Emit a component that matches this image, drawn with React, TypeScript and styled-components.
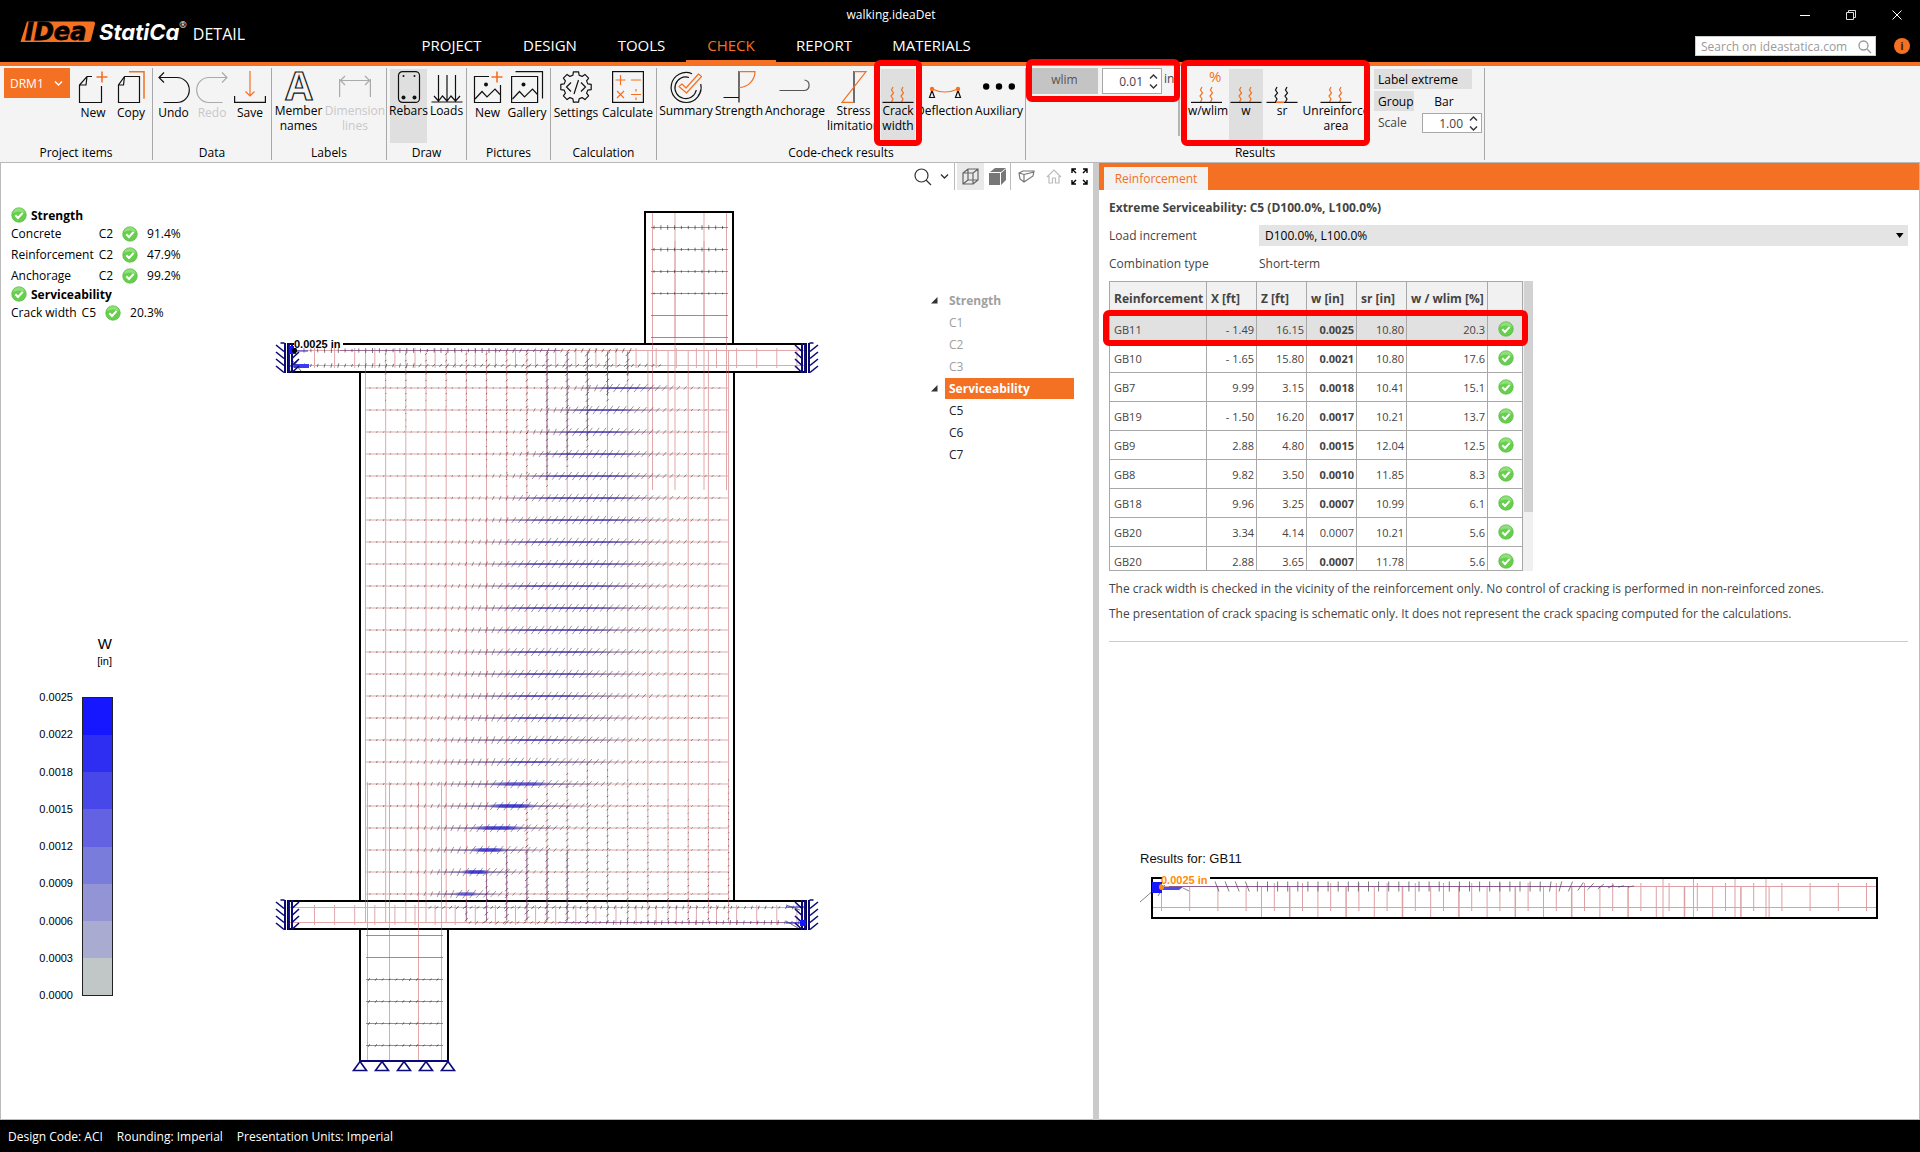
import React from 'react';
import styled, { createGlobalStyle, css } from 'styled-components';

const orange = '#f47023';
const uiFont = '"Open Sans", "Noto Sans", sans-serif';
const viewFont = '"Liberation Sans", Arial, sans-serif';

const GlobalStyle = createGlobalStyle`
  *, *::before, *::after { box-sizing: border-box; }
  body { margin: 0; background: #fff; font-family: ${uiFont}; font-size: 12px; line-height: 15px; color: #000; }
  button, input, select { font: inherit; color: inherit; border: 0; padding: 0; margin: 0; background: none; border-radius: 0; }
  svg { display: block; overflow: visible; }
`;

const Page = styled.div`
  height: 100vh;
  display: flex;
  flex-direction: column;
  overflow: hidden;
`;

/* ---------- header ---------- */

const Header = styled.header`
  display: flex;
  flex: none;
  background: #000;
  color: #fff;
  border-bottom: 4px solid ${orange};
`;
const Brand = styled.div`
  width: 400px;
  padding: 1px 0 0 20px;
  display: flex;
  align-items: center;
`;
const StatiCa = styled.span`
  margin-left: 3px;
  font: italic 700 22px/24px Inter, sans-serif;
`;
const Reg = styled.sup`
  align-self: flex-start;
  margin-top: 19px;
  font-size: 9px;
  line-height: 10px;
`;
const Product = styled.span`
  margin: 5px 0 0 6px;
  font-size: 16px;
  line-height: 20px;
`;
const HeaderCenter = styled.div`
  flex: 1;
`;
const DocTitle = styled.div`
  height: 28px;
  padding-top: 1px;
  line-height: 28px;
  text-align: center;
`;
const Nav = styled.nav`
  display: flex;
`;
const NavTab = styled.button<{ $w: number; $active?: boolean }>`
  width: ${p => p.$w}px;
  height: 34px;
  font-size: 15px;
  color: ${p => (p.$active ? orange : '#fff')};
  ${p => p.$active && css`box-shadow: inset 0 -2px ${orange};`}
`;
const HeaderRight = styled.div`
  width: 538px;
`;
const WindowButtons = styled.div`
  display: flex;
  justify-content: flex-end;
`;
const WindowButton = styled.button`
  width: 46px;
  height: 30px;
  display: grid;
  place-items: center;
`;
const SearchRow = styled.div`
  height: 32px;
  display: flex;
  align-items: center;
  justify-content: flex-end;
  gap: 18px;
  padding-right: 10px;
`;
const SearchBox = styled.label`
  width: 181px;
  height: 20px;
  display: flex;
  align-items: center;
  padding: 0 4px 0 5px;
  background: #fff;
  border: 1px solid #ccc;
`;
const SearchInput = styled.input`
  flex: 1;
  min-width: 0;
  outline: 0;
  color: #333;
  &::placeholder { color: #999; opacity: 1; }
`;
const InfoButton = styled.button`
  width: 16px;
  height: 16px;
  border-radius: 50%;
  background: ${orange};
  color: #402010;
  font-size: 11px;
  font-weight: 700;
  line-height: 16px;
`;

/* ---------- ribbon ---------- */

const Ribbon = styled.div`
  flex: none;
  display: flex;
  height: 97px;
  padding: 2px 0;
  background: #f4f4f4;
  border-bottom: 1px solid #b8b8b8;
`;
const Group = styled.section<{ $w: number }>`
  width: ${p => p.$w}px;
  flex: none;
  display: flex;
  flex-direction: column;
  justify-content: space-between;
  border-right: 1px solid #a8a8a8;
`;
const Tools = styled.div<{ $pad?: number }>`
  display: flex;
  padding-left: ${p => p.$pad ?? 1}px;
`;
const GroupLabel = styled.div`
  text-align: center;
`;
const ProjectButton = styled.button`
  width: 66px;
  height: 30px;
  margin-right: 4px;
  padding: 0 7px 0 6px;
  display: flex;
  align-items: center;
  justify-content: space-between;
  background: ${orange};
  color: #fff;
`;
const ToolButton = styled.button<{ $w: number; $active?: boolean; $off?: boolean; $tall?: boolean }>`
  position: relative;
  flex: none;
  width: ${p => p.$w}px;
  height: ${p => (p.$tall ? 74 : 71)}px;
  margin-top: 1px;
  padding-top: 2px;
  display: flex;
  flex-direction: column;
  align-items: center;
  white-space: nowrap;
  background: ${p => (p.$active ? '#dfdfdf' : 'transparent')};
  color: ${p => (p.$off ? '#c8c8c8' : '#000')};
`;
const ToolText = styled.span<{ $low?: boolean }>`
  padding-top: ${p => (p.$low ? 2 : 0)}px;
  text-align: center;
`;
const Marker = styled.span<{ $box: string }>`
  position: absolute;
  inset: ${p => p.$box};
  z-index: 2;
  border: 6px solid #f00;
  border-radius: 6px;
  pointer-events: none;
`;
const LimitArea = styled.div`
  position: relative;
  flex: none;
  width: 154px;
  height: 68px;
  padding-left: 5px;
  display: flex;
  align-items: flex-start;
  border-right: 2px solid #b4b4b4;
  color: #444;
`;
const LimitButton = styled.button`
  width: 67px;
  height: 26px;
  margin-right: 4px;
  padding-bottom: 4px;
  background: #c4c4c4;
  color: #555;
`;
const Unit = styled.span`
  padding: 3px 0 0 2px;
`;
const ModeArea = styled.div`
  position: relative;
  display: flex;
  flex: none;
  width: 190px;
  padding-left: 7px;
`;
const Options = styled.div`
  display: grid;
  grid-template-columns: 40px 60px;
  grid-auto-rows: 20px;
  gap: 2px 8px;
  padding: 1px 0 0 4px;
`;
const OptionButton = styled.button<{ $active?: boolean; $wide?: boolean }>`
  ${p => p.$wide && css`grid-column: 1 / 3; width: 98px; text-align: left;`}
  padding: 0 4px;
  background: ${p => (p.$active ? '#dfdfdf' : 'transparent')};
`;
const BarButton = styled(OptionButton)`
  width: 44px;
`;
const ScaleLabel = styled.label`
  padding-left: 4px;
  line-height: 20px;
  color: #444;
`;
const SpinBox = styled.span<{ $h: number }>`
  width: 60px;
  height: ${p => p.$h}px;
  display: flex;
  align-items: center;
  gap: 6px;
  background: #fff;
  border: 1px solid #a8a8a8;
`;
const SpinInput = styled.input`
  width: 40px;
  text-align: right;
  outline: 0;
  color: #444;
`;
const SpinButtons = styled.span`
  display: flex;
  flex-direction: column;
  gap: 5px;
`;
const SpinButton = styled.button`
  display: block;
`;

/* ---------- main area ---------- */

const Main = styled.main`
  flex: 1;
  min-height: 0;
  display: grid;
  grid-template-columns: minmax(0, 1093fr) 6px minmax(0, 821fr);
`;
const Splitter = styled.div`
  background: #cbcbcb;
`;
const ViewPane = styled.section`
  display: flex;
  flex-direction: column;
  border-left: 1px solid #bbb;
  border-bottom: 1px solid #bbb;
  overflow: hidden;
`;
const ViewBar = styled.div`
  height: 27px;
  flex: none;
  display: flex;
  justify-content: flex-end;
  padding-right: 1px;
`;
const ViewButton = styled.button<{ $w?: number; $active?: boolean; $sep?: boolean }>`
  width: ${p => p.$w ?? 27}px;
  display: grid;
  place-items: center;
  background: ${p => (p.$active ? '#e9e9e9' : 'transparent')};
  ${p => p.$sep && css`border-right: 1px solid #bbb; margin-right: 2px;`}
`;
const ViewBody = styled.div`
  flex: 1;
  display: flex;
  align-items: flex-start;
`;
const SideColumn = styled.div`
  width: 259px;
  padding: 17px 0 0 10px;
`;
const ModelView = styled.div`
  flex: 1;
  min-width: 0;
`;
const CheckHead = styled.h3`
  height: 16px;
  margin: 0;
  display: flex;
  align-items: center;
  gap: 4px;
  font-size: 12px;
  font-weight: 700;
`;
const CheckTable = styled.table`
  border-spacing: 0;
  td { height: 21px; padding: 0 9px 0 0; }
  td:first-child { padding-right: 5px; }
`;
const Legend = styled.div`
  width: 102px;
  margin-top: 311px;
  font-family: ${viewFont};
  font-size: 11px;
`;
const LegendTitle = styled.div<{ $big?: boolean }>`
  padding-right: 1px;
  text-align: right;
  font-size: ${p => (p.$big ? 15 : 11)}px;
  line-height: ${p => (p.$big ? 20 : 15)}px;
`;
const LegendScale = styled.div`
  display: grid;
  grid-template-columns: 1fr 31px;
  column-gap: 9px;
  height: 310px;
  margin-top: 22px;
`;
const LegendValues = styled.div`
  display: flex;
  flex-direction: column;
  justify-content: space-between;
  text-align: right;
  line-height: 12px;
`;
const LegendBar = styled.div`
  margin: 6px 0 5px;
  display: flex;
  flex-direction: column;
  border: 1px solid #222;
`;
const LegendCell = styled.div<{ $c: string }>`
  flex: 1;
  background: ${p => p.$c};
`;
const Tree = styled.ul`
  width: 253px;
  margin: 0;
  padding: 99px 19px 0 91px;
  list-style: none;
`;
const TreeRow = styled.li`
  height: 22px;
  display: flex;
  align-items: center;
  gap: 7px;
`;
const Twisty = styled.span`
  width: 7px;
`;
const TreeButton = styled.button<{ $bold?: boolean; $active?: boolean; $off?: boolean }>`
  flex: 1;
  height: 21px;
  padding-left: 4px;
  text-align: left;
  font-weight: ${p => (p.$bold ? 700 : 400)};
  color: ${p => (p.$active ? '#fff' : p.$off ? '#a0a0a0' : '#222')};
  background: ${p => (p.$active ? orange : 'transparent')};
`;

const DetailPane = styled.section`
  border-right: 1px solid #bbb;
  border-bottom: 1px solid #bbb;
  color: #444;
`;
const TabBar = styled.div`
  height: 27px;
  display: flex;
  align-items: flex-end;
  padding-left: 5px;
  background: ${orange};
`;
const PaneTab = styled.button`
  width: 104px;
  height: 23px;
  background: #f2f2f2;
  color: ${orange};
`;
const DetailBody = styled.div`
  padding: 9px 11px 0 10px;
`;
const DetailTitle = styled.h2`
  margin: 0;
  font-size: 12px;
  line-height: 18px;
  font-weight: 700;
`;
const FieldRow = styled.div`
  display: grid;
  grid-template-columns: 150px 1fr;
  align-items: center;
  height: 21px;
  margin-top: 7px;
`;
const LoadRow = styled(FieldRow)`
  margin-top: 8px;
`;
const SelectBox = styled.span`
  display: grid;
  grid-template-columns: 1fr 12px;
  align-items: center;
  background: #e4e4e4;
  color: #000;
`;
const LoadSelect = styled.select`
  grid-area: 1 / 1 / 2 / 3;
  height: 21px;
  padding-left: 6px;
  appearance: none;
`;
const SelectArrow = styled.svg`
  grid-area: 1 / 2;
  pointer-events: none;
`;
const GridWrap = styled.div`
  position: relative;
  width: 424px;
  height: 290px;
  margin-top: 7px;
  display: flex;
`;
const GridClip = styled.div`
  flex: 1;
  overflow: hidden;
  border-bottom: 1px solid #a8a8a8;
`;
const Grid = styled.table`
  width: 414px;
  table-layout: fixed;
  border-collapse: collapse;
  th, td { border: 1px solid #a8a8a8; padding: 0 2px 0 4px; white-space: nowrap; }
  th { height: 33px; background: #f1f1f1; text-align: left; font-size: 12px; font-weight: 700; padding-right: 0; }
  td { height: 29px; text-align: right; font-size: 11px; }
  td:first-child { text-align: left; }
`;
const GridRow = styled.tr<{ $active?: boolean }>`
  background: ${p => (p.$active ? '#e1e1e1' : '#fff')};
`;
const Num = styled.td<{ $bold?: boolean }>`
  font-weight: ${p => (p.$bold ? 700 : 400)};
`;
const CheckCell = styled.span`
  display: grid;
  place-items: center;
`;
const Track = styled.div`
  width: 10px;
  background: #f0f0f0;
`;
const Thumb = styled.div`
  height: 231px;
  margin-left: 1px;
  background: #d2d2d2;
`;
const Note = styled.p`
  margin: 10px 0 0;
`;
const Divider = styled.hr`
  margin: 20px 0 0;
  border: 0;
  border-top: 1px solid #ccc;
`;
const BeamView = styled.svg`
  width: 100%;
  height: auto;
  margin-top: 203px;
`;

const StatusBar = styled.footer`
  flex: none;
  height: 32px;
  padding-left: 8px;
  display: flex;
  align-items: center;
  gap: 14px;
  background: #000;
  color: #fff;
`;

/* ---------- icons ---------- */

const Icon = ({ children }: { children: React.ReactNode }) => (
  <svg width="32" height="32" viewBox="0 0 32 32" fill="none" stroke="#111" strokeWidth="1.2" aria-hidden="true">{children}</svg>
);
const squiggle = (x: number) => `M${x + 1} 16l-1.5 3 2 3-2.5 3 2 3-1.5 3`;

const gearPath = (() => {
  const pts: string[] = [];
  for (let i = 0; i < 8; i++) {
    const a = (i * Math.PI) / 4 - Math.PI / 2;
    [[-0.26, 12.2], [-0.17, 15.4], [0.17, 15.4], [0.26, 12.2]].forEach(([d, r]) => {
      pts.push(`${(16 + r * Math.cos(a + d)).toFixed(1)} ${(16 + r * Math.sin(a + d)).toFixed(1)}`);
    });
  }
  return `M${pts.join('L')}Z`;
})();

const Plus = () => <path d="M25 .5v11M19.500 6h11" stroke={orange} strokeWidth="1.6" />;
const Photo = () => (
  <>
    <circle cx="14" cy="13.500" r="2" fill="#111" stroke="none" />
    <path d="M3 28l7-7.500 5 5.500 8-8 5 5.500" />
  </>
);

const icons: Record<string, React.ReactNode> = {
  newDoc: <Icon><path d="M15 5.500H10L2.500 14v17.500h22V15M10 5.500L9 14H2.500" /><Plus /></Icon>,
  copy: <Icon><path d="M9.500 5.500h15v26h-21V14l6-8.500-1 8.500h-5" /><path d="M14 .7h15v27" stroke={orange} strokeWidth="1.500" /></Icon>,
  undo: <Icon><path d="M6 1.500L1 6.500l5 5M1 6.500h18a12.300 12.500 0 0 1 0 25H5.500" /></Icon>,
  redo: <Icon><path stroke="#aaa" d="M26 1.500l5 5-5 5M31 6.500H13a12.300 12.500 0 0 0 0 25h13.500" /></Icon>,
  save: <Icon><path d="M.6 25v6.400h30.800V25" /><path d="M16 0v25M11.500 20.500L16 25l4.500-4.500" stroke={orange} /></Icon>,
  member: (
    <Icon>
      <text x="16" y="29" textAnchor="middle" fontFamily="Open Sans" fontWeight="700" fontSize="39">A</text>
    </Icon>
  ),
  dimension: <Icon><path stroke="#aaa" d="M.6 8v18M31.400 8v18M1 9.500h30M6 5L1.500 9.500 6 14M26 5l4.500 4.500L26 14" /></Icon>,
  rebars: (
    <Icon>
      <rect x="5.500" y=".6" width="21" height="30.800" rx="4" />
      <g fill="#111" stroke="none"><circle cx="10.500" cy="5" r="1" /><circle cx="21.500" cy="5" r="1" /><circle cx="10.500" cy="26.500" r="2" /><circle cx="21.500" cy="26.500" r="2" /></g>
    </Icon>
  ),
  loads: <Icon><path d="M7.500 4v25M16 4v25M24.500 4v25M3 25l4.500 5 4-5 4.500 5 4-5 4.500 5 4.500-5M.5 31h31" /></Icon>,
  newPic: <Icon><path d="M17 5.500H2.500v26h26V14" /><Photo /><Plus /></Icon>,
  gallery: <Icon><path d="M.6 5.500h26v26H.6zM4.500.6h27v27" /><g transform="translate(-1.500 0)"><Photo /></g></Icon>,
  settings: <Icon><path strokeLinejoin="round" d={gearPath} /><path d="M11 11.500L6.500 16l4.500 4.500M21 11.500l4.500 4.500-4.500 4.500M18.500 9l-4.500 14" /></Icon>,
  calculate: (
    <Icon>
      <rect x=".6" y=".6" width="30.800" height="30.800" />
      <path stroke={orange} d="M3.500 9h10M8.500 4v10M19 9h10M5 20l7 7M12 20l-7 7M19 23.500h10M24 18v2.500M24 26.500V29" />
    </Icon>
  ),
  summary: (
    <Icon>
      <path d="M22 2.700A15 15 0 1 0 30.700 13M19 6.500A10.800 10.800 0 1 0 26.300 19M31 18a15 15 0 0 1-3 7" />
      <path stroke={orange} strokeLinejoin="round" d="M9 15.500l3-2.500 4 4L28.500 3l3 2.500L16.500 22z" />
    </Icon>
  ),
  strength: <Icon><path d="M16 0v31.500M.5 26.500H16" /><path stroke={orange} d="M16 .6h16A16 16 0 0 1 16 16.500" /></Icon>,
  anchorage: <Icon><path stroke="#555" d="M.5 19.500h25a5.300 5.300 0 0 0 0-10.500" /></Icon>,
  stress: <Icon><path d="M16 0v32" /><path stroke={orange} d="M16 .6h12L4 31.400h12" /></Icon>,
  crack: <Icon><path stroke={orange} d={squiggle(10) + squiggle(20)} /><path d="M.5 31.400h31" /></Icon>,
  deflection: (
    <Icon>
      <path d="M3 19.500L.5 26.500h5zM29 19.500l-2.500 7h5z" />
      <path stroke={orange} d="M3 18q13 6 26 0" /><g fill={orange} stroke="none"><circle cx="3" cy="18" r="2.200" /><circle cx="29" cy="18" r="2.200" /></g>
    </Icon>
  ),
  auxiliary: <Icon><g fill="#000" stroke="none"><circle cx="3.200" cy="15.500" r="3.200" /><circle cx="16" cy="15.500" r="3.200" /><circle cx="28.800" cy="15.500" r="3.200" /></g></Icon>,
  ratio: (
    <Icon>
      <path stroke={orange} d={squiggle(9) + squiggle(19)} /><path d="M-1 31.400h31" />
      <text x="17" y="11" fill={orange} stroke="none" fontFamily="Open Sans" fontSize="15">%</text>
    </Icon>
  ),
  spacing: <Icon><path d={squiggle(10) + squiggle(20)} /><path d="M.5 31.400h31" /><path stroke={orange} d="M10 31.400h8" /></Icon>,
};

const CheckMark = () => (
  <svg width="16" height="16" viewBox="0 0 16 16" role="img" aria-label="OK">
    <circle cx="8" cy="8" r="7.300" fill="#67cf4d" stroke="#52b53a" strokeWidth=".6" />
    <path d="M2 6a6.200 6.200 0 0 1 12 0q-6-3-12 0" fill="#8fe07a" />
    <path d="M4.300 8.200l2.700 2.700 4.700-5" fill="none" stroke="#fff" strokeWidth="2.100" />
  </svg>
);
const Chevron = ({ up, c = '#333' }: { up?: boolean; c?: string }) => (
  <svg width="9" height="5" viewBox="0 0 9 5" aria-hidden="true"><path d={up ? 'M1 4.500l3.500-3.500L8 4.500' : 'M1 .5L4.500 4 8 .5'} fill="none" stroke={c} strokeWidth="1.400" /></svg>
);

/* ---------- model drawing ---------- */

const rebar = '#c4545a';
const range = (n: number) => Array.from({ length: n }, (_, i) => i);
const barX = (i: number) => 365.5 + 20.17 * i;
const barY = (k: number) => 388 + 22 * k;

type Crack = { c: number; core: number; spread: number; peak: number };
const wallCracks: Crack[] = range(24).map(k => {
  const c = k < 1 ? 624 : k < 3 ? 612 - k * 9 : k < 16 ? 590 - (k - 3) * 4 : [536, 528, 521, 512, 498, 489, 476, 466][k - 16];
  const core = k < 3 ? 18 + k * 4 : k < 8 ? 28 + k * 3 : k < 16 ? 50 - (k - 8) * 3 : [24, 22, 21, 16, 17, 12, 10, 8][k - 16];
  const spread = k < 8 ? 70 + k * 9 : k < 17 ? 135 : 130 - (k - 17) * 13;
  const peak = k < 14 ? 0.5 : k < 18 ? 0.55 : [0.65, 0.9, 0.85, 0.85, 0.9, 0.6][k - 18];
  return { c, core, spread, peak };
});

const WallCrackRow = ({ y, crack, thick }: { y: number; crack: Crack; thick: boolean }) => {
  const { c, core, spread, peak } = crack;
  const wide = Math.min(spread * 0.75, c - 368, 728 - c);
  const mid = core * 1.5;
  const h = thick ? 3.6 : 2;
  let d = '';
  for (let x = 370; x < 724; x += 6.85) {
    const t = (x - c) / spread;
    const s = 0.7 + 3.5 * Math.exp(-t * t * 1.7);
    const lean = x < c - core * 1.5 ? 0.45 : x < c + core ? 0.75 : 0.9;
    d += `M${(x - s * lean).toFixed(1)} ${(y + s).toFixed(1)}L${(x + s * lean).toFixed(1)} ${(y - s).toFixed(1)}`;
  }
  return (
    <g>
      <rect x={c - wide} y={y - 0.5} width={wide * 2} height="1.200" fill="url(#purpleFade)" />
      <rect x={c - mid} y={y - h / 2} width={mid * 2} height={h} fill="url(#blueFade)" opacity={peak} />
      <path d={d} stroke="#222" strokeWidth=".6" opacity=".8" />
    </g>
  );
};

const ticksDown = (x: number, y1: number, y2: number, s: number, fade: number) => {
  let d = '';
  for (let y = y1; y < y2; y += 6.6) {
    const t = (y - y1) / (y2 - y1);
    const k = s * (fade > 0 ? 1 - t * 0.6 : 0.4 + t * 0.6);
    d += `M${(x - k).toFixed(1)} ${(y + k).toFixed(1)}L${(x + k).toFixed(1)} ${(y - k).toFixed(1)}`;
  }
  return d;
};
const topRuns: [number, number, number][] = [[1, 405, 0.9], [2, 430, 0.9], [3, 405, 0.9], [4, 410, 1], [5, 430, 1], [6, 470, 1], [7, 490, 1.3], [8, 500, 1.7], [9, 490, 2], [10, 470, 2.5], [11, 450, 2.9], [12, 406, 2.9], [13, 386, 2.5]];
const bottomRuns: [number, number, number][] = [[5, 900, 2.3], [6, 874, 2.4], [7, 850, 2.7], [8, 800, 2.9], [9, 794, 2.8], [10, 774, 2.4], [11, 764, 2], [12, 770, 1.7], [13, 780, 1.4], [14, 790, 1.2], [15, 800, 1], [16, 800, 1], [17, 800, 1], [18, 780, 1]];

const beamTicks = (y: number, a: number, b: number, s: number, lean: number) => {
  let d = '';
  for (let x = a; x < b; x += 6.85) {
    const q = s * (0.6 + 0.4 * Math.abs(Math.sin(x)));
    d += `M${(x - lean).toFixed(1)} ${(y + q).toFixed(1)}L${(x + lean).toFixed(1)} ${(y - q).toFixed(1)}`;
  }
  return d;
};

const Support = ({ x, y, dir }: { x: number; y: number; dir: 1 | -1 }) => (
  <g transform={`translate(${x} ${y}) scale(${dir} 1)`} stroke="#0a0a78" fill="none">
    <path strokeWidth="2" d="M-3 0v30M4 0v30" />
    <path strokeWidth="2.500" d="M.7 0v30" />
    <path strokeWidth="1.600" d="M-12 2l8 6.500M-12 9l8 6.500M-12 16l8 6.500M-12 23l8 6.500M-7.500 0h4M11 2l-7 6.500M11 9l-7 6.500M11 16l-7 6.500M11 23l-7 6.500" />
  </g>
);

const Model = () => (
  <svg width="100%" viewBox="260 190 580 900" fill="none" role="img" aria-label="Crack width model">
    <defs>
      <linearGradient id="purpleFade">
        <stop offset="0" stopColor="#6a3f86" stopOpacity="0" />
        <stop offset=".3" stopColor="#5a3f94" stopOpacity=".8" />
        <stop offset=".7" stopColor="#5a3f94" stopOpacity=".8" />
        <stop offset="1" stopColor="#6a3f86" stopOpacity="0" />
      </linearGradient>
      <linearGradient id="blueFade">
        <stop offset="0" stopColor="#4a3fc0" stopOpacity="0" />
        <stop offset=".3" stopColor="#3a34d8" />
        <stop offset=".7" stopColor="#3a34d8" />
        <stop offset="1" stopColor="#4a3fc0" stopOpacity="0" />
      </linearGradient>
    </defs>
    <g stroke="#000" strokeWidth="2">
      <rect x="645" y="212" width="88" height="132" />
      <rect x="360" y="372" width="374" height="529" />
      <rect x="288" y="344" width="518" height="28" />
      <rect x="288" y="901" width="518" height="28" />
      <path d="M360 929v132M448 929v132" />
    </g>

    <g stroke={rebar} strokeWidth="1" opacity=".5">
      {range(24).map(k => <path key={k} d={`M365.500 ${barY(k)}H729`} />)}
      {range(19).map(i => <path key={i} d={`M${barX(i)} 350V922`} />)}
      {[350.5, 365.5, 907.5, 922.5].map(y => <path key={y} d={`M288 ${y}H806`} />)}
      {range(25).map(i => <path key={i} d={`M${314.500 + 20.1 * i} 348v20M${314.500 + 20.1 * i} 905v20`} />)}
      {[652.5, 675, 704, 726.500].map(x => <path key={x} d={`M${x} 213V338M${x} 241V490`} />)}
      {[367.500, 389.500, 418.500, 441.500].map(x => <path key={x} d={`M${x} 782V1061M${x} 934V1031`} />)}
    </g>
    <g stroke={rebar} strokeWidth="1" opacity=".8">
      {range(6).map(i => <path key={i} d={`M651 ${227.500 + 22 * i}h77M366 ${935.500 + 22 * i}h77`} />)}
    </g>

    <g stroke="#222" strokeWidth=".8" opacity=".75">
      {range(4).map(i => <path key={i} d={beamTicks(227.500 + 22 * i, 654, 726, 2.4 - i * 0.4, 0)} />)}
      {range(4).map(i => <path key={i} d={beamTicks(979.500 + 22 * i, 369, 441, 1.4, 0.8)} />)}
      <path d={beamTicks(350.5, 304, 500, 2.5, 0)} />
      <path d={beamTicks(350.5, 500, 632, 2.2, 1)} />
      <path d={beamTicks(365.5, 304, 420, 2.3, 0.5)} />
      <path d={beamTicks(365.5, 420, 660, 1.8, 1.3)} />
      <path d={beamTicks(907.5, 430, 560, 1.6, 1.4)} />
      <path d={beamTicks(907.5, 560, 795, 1.8, 0.6)} />
      <path d={beamTicks(922.5, 470, 600, 1.4, 1.2)} />
      <path d={beamTicks(922.5, 600, 800, 2.3, 0.3)} />
      {topRuns.map(([i, y, s]) => <path key={i} d={ticksDown(barX(i), 354, y, s * 0.8, 1)} />)}
      {bottomRuns.map(([i, y, s]) => <path key={i} d={ticksDown(barX(i), y, 924, s * 0.8, -1)} />)}
    </g>
    <g stroke="#6a3f86" strokeWidth="1" opacity=".55">
      <path d="M340 350.500H560M560 922.500H800" />
      {topRuns.slice(8).map(([i, y]) => <path key={i} d={`M${barX(i)} 352V${y - 10}`} />)}
      {bottomRuns.slice(0, 6).map(([i, y]) => <path key={i} d={`M${barX(i)} ${Math.max(y, 850)}V920`} />)}
    </g>

    {wallCracks.map((crack, k) => <WallCrackRow key={k} y={barY(k)} crack={crack} thick={k > 17} />)}

    <path d="M289 351h19M289 366h19M786 907h18M786 923h18" stroke="#3b3bf0" strokeWidth="1.500" opacity=".75" />
    <path d="M294 366h15" stroke="#3b3bf0" strokeWidth="4" />
    <path d="M292 360l9 11M290 372l8-12M786 921l12 7M786 905l14 5" stroke="#444" strokeWidth=".8" />
    <Support x={288} y={343} dir={1} />
    <Support x={806} y={343} dir={-1} />
    <Support x={288} y={900} dir={1} />
    <Support x={806} y={900} dir={-1} />
    <rect x="289" y="346" width="7" height="8" fill="#1616ff" />
    <rect x="800" y="920" width="6" height="6" fill="#1616ff" />
    <circle cx="294.500" cy="350.500" r="2.600" fill="#000" />
    <rect x="294" y="338" width="49" height="10" fill="#fff" />
    <text x="294" y="348" fill="#000" fontFamily="Liberation Sans" fontWeight="700" fontSize="11">0.0025 in</text>

    <path d="M359 1061h90" stroke="#0a0a78" strokeWidth="2" />
    {range(5).map(i => <path key={i} d={`M${360 + 22 * i} 1061.500l6.500 9h-13z`} stroke="#0a0a78" strokeWidth="1.600" />)}
  </svg>
);

const Beam = () => {
  let ticks = '';
  for (let x = 108; x < 526; x += 10.1) {
    const lean = x < 140 ? -2 : x < 430 ? 0 : Math.min(3, (x - 430) / 15);
    const s = x < 460 ? 5 : Math.max(0.6, 5 - (x - 460) / 12);
    ticks += `M${x - lean} ${67.5 + s}L${x + lean} ${67.5 - s}`;
  }
  return (
    <BeamView viewBox="0 0 799 80" fill="none" role="img" aria-label="Results for GB11">
      <text x="31" y="18" fill="#111" fontFamily="Liberation Sans" fontSize="13">Results for: GB11</text>
      <g stroke={rebar} strokeWidth="1" opacity=".55" transform="translate(0 -26)">
        <path d="M43 67.500H768M43 88.500H768" />
        {range(26).map(i => <path key={i} d={`M${52.500 + 28.200 * i} ${i < 4 ? 67 : 64}V92`} />)}
        {range(19).map(i => <path key={i} d={`M${152.500 + 28.200 * i} 67v31`} strokeWidth={i % 2 ? 1.5 : 1} />)}
        <path d="M554 59v39M584.500 59v39M626 59v39M657 59v39" />
      </g>
      <g transform="translate(0 -26)">
        <path d="M60 67.500H520" stroke="#6a3f86" opacity=".7" />
        <path d={ticks} stroke="#444" strokeWidth=".7" />
        <path d="M52 68h22l-4 3H52z" fill="#4a4af0" />
        <path d="M31 83l23-20M49 77l8-13M74 69l6 3" stroke="#666" strokeWidth=".8" />
      </g>
      <rect x="43" y="33" width="725" height="40" stroke="#000" strokeWidth="2" />
      <rect x="43" y="37" width="10" height="11" fill="#1616ff" />
      <ellipse cx="52.500" cy="42" rx="2.500" ry="3" fill="#ff8c00" />
      <rect x="53" y="30" width="48" height="10" fill="#fff" />
      <text x="52" y="39" fill="#ff8c00" fontFamily="Liberation Sans" fontWeight="700" fontSize="11">0.0025 in</text>
    </BeamView>
  );
};

/* ---------- composition ---------- */

type ToolProps = { icon: string; label: string[]; w: number; active?: boolean; off?: boolean; low?: boolean; tall?: boolean; children?: React.ReactNode };
const Tool = ({ icon, label, w, active, off, low, tall, children }: ToolProps) => (
  <ToolButton $w={w} $active={active} $off={off} $tall={tall} disabled={off}>
    {icons[icon]}
    <ToolText $low={low}>{label.map((t, i) => <React.Fragment key={t}>{i > 0 && <br />}{t}</React.Fragment>)}</ToolText>
    {children}
  </ToolButton>
);

const Spin = ({ id, value, h, name }: { id: string; value: string; h: number; name: string }) => (
  <SpinBox $h={h}>
    <SpinInput id={id} aria-label={name} defaultValue={value} />
    <SpinButtons>
      <SpinButton aria-label={`Increase ${name}`}><Chevron up /></SpinButton>
      <SpinButton aria-label={`Decrease ${name}`}><Chevron /></SpinButton>
    </SpinButtons>
  </SpinBox>
);

const tabs: [string, number][] = [['PROJECT', 103], ['DESIGN', 94], ['TOOLS', 89], ['CHECK', 90], ['REPORT', 96], ['MATERIALS', 119]];
const strengthRows = [['Concrete', 'C2', '91.4%'], ['Reinforcement', 'C2', '47.9%'], ['Anchorage', 'C2', '99.2%']];
const serviceRows = [['Crack width', 'C5', '20.3%']];
const legend = [['0.0025', '#1616ff'], ['0.0022', '#2e2ef2'], ['0.0018', '#4848ea'], ['0.0015', '#6262e2'], ['0.0012', '#7a7cdc'], ['0.0009', '#9294d6'], ['0.0006', '#a9acd0'], ['0.0003', '#c1c7c7'], ['0.0000', '']];
const gridRows = [
  ['GB11', '- 1.49', '16.15', '0.0025', '10.80', '20.3'],
  ['GB10', '- 1.65', '15.80', '0.0021', '10.80', '17.6'],
  ['GB7', '9.99', '3.15', '0.0018', '10.41', '15.1'],
  ['GB19', '- 1.50', '16.20', '0.0017', '10.21', '13.7'],
  ['GB9', '2.88', '4.80', '0.0015', '12.04', '12.5'],
  ['GB8', '9.82', '3.50', '0.0010', '11.85', '8.3'],
  ['GB18', '9.96', '3.25', '0.0007', '10.99', '6.1'],
  ['GB20', '3.34', '4.14', '0.0007', '10.21', '5.6'],
  ['GB20', '2.88', '3.65', '0.0007', '11.78', '5.6'],
];
const tree = [
  { t: 'Strength', head: true, off: true }, { t: 'C1', off: true }, { t: 'C2', off: true }, { t: 'C3', off: true },
  { t: 'Serviceability', head: true, active: true }, { t: 'C5' }, { t: 'C6' }, { t: 'C7' },
] as { t: string; head?: boolean; off?: boolean; active?: boolean }[];

const CheckRows = ({ rows }: { rows: string[][] }) => (
  <CheckTable>
    <tbody>
      {rows.map(([n, c, v]) => <tr key={n}><td>{n}</td><td>{c}</td><td><CheckMark /></td><td>{v}</td></tr>)}
    </tbody>
  </CheckTable>
);

export default function App() {
  return (
    <Page>
      <GlobalStyle />
      <Header>
        <Brand>
          <svg width="76" height="22" viewBox="0 0 76 22" role="img" aria-label="IDEA">
            <path d="M7 .5h66q2.500 0 2 2.500l-4 16q-.5 2-3 2H.5z" fill={orange} />
            <text x="5" y="19" fill="#000" stroke="#000" strokeWidth=".8" fontFamily="DejaVu Sans" fontWeight="700" fontStyle="italic" fontSize="24">IDea</text>
          </svg>
          <StatiCa>StatiCa</StatiCa>
          <Reg>®</Reg>
          <Product>DETAIL</Product>
        </Brand>
        <HeaderCenter>
          <DocTitle>walking.ideaDet</DocTitle>
          <Nav>{tabs.map(([t, w]) => <NavTab key={t} $w={w} $active={t === 'CHECK'}>{t}</NavTab>)}</Nav>
        </HeaderCenter>
        <HeaderRight>
          <WindowButtons>
            <WindowButton aria-label="Minimize"><svg width="10" height="10" stroke="#fff"><path d="M0 5.500h10" /></svg></WindowButton>
            <WindowButton aria-label="Restore"><svg width="10" height="10" fill="none" stroke="#ddd"><path d="M.5 2.500h7v7h-7zM2.500 2V.5h7v7H8" /></svg></WindowButton>
            <WindowButton aria-label="Close"><svg width="10" height="10" stroke="#fff"><path d="M.5.5l9 9M9.500.5l-9 9" /></svg></WindowButton>
          </WindowButtons>
          <SearchRow>
            <SearchBox>
              <SearchInput aria-label="Search" placeholder="Search on ideastatica.com" />
              <svg width="13" height="13" fill="none" stroke="#999" strokeWidth="1.300"><circle cx="5.500" cy="5.500" r="4.500" /><path d="M9 9l4 4" /></svg>
            </SearchBox>
            <InfoButton aria-label="Information">i</InfoButton>
          </SearchRow>
        </HeaderRight>
      </Header>

      <Ribbon>
        <Group $w={153}>
          <Tools $pad={4}>
            <ProjectButton>DRM1<Chevron c="#fff" /></ProjectButton>
            <Tool icon="newDoc" label={['New']} w={38} low />
            <Tool icon="copy" label={['Copy']} w={38} low />
          </Tools>
          <GroupLabel>Project items</GroupLabel>
        </Group>
        <Group $w={119}>
          <Tools>
            <Tool icon="undo" label={['Undo']} w={39} low />
            <Tool icon="redo" label={['Redo']} w={38} low off />
            <Tool icon="save" label={['Save']} w={38} low />
          </Tools>
          <GroupLabel>Data</GroupLabel>
        </Group>
        <Group $w={115}>
          <Tools $pad={0}>
            <Tool icon="member" label={['Member', 'names']} w={53} />
            <Tool icon="dimension" label={['Dimension', 'lines']} w={60} off />
          </Tools>
          <GroupLabel>Labels</GroupLabel>
        </Group>
        <Group $w={80}>
          <Tools $pad={3}>
            <Tool icon="rebars" label={['Rebars']} w={37} active tall />
            <Tool icon="loads" label={['Loads']} w={39} />
          </Tools>
          <GroupLabel>Draw</GroupLabel>
        </Group>
        <Group $w={84}>
          <Tools>
            <Tool icon="newPic" label={['New']} w={39} low />
            <Tool icon="gallery" label={['Gallery']} w={40} low />
          </Tools>
          <GroupLabel>Pictures</GroupLabel>
        </Group>
        <Group $w={106}>
          <Tools $pad={0}>
            <Tool icon="settings" label={['Settings']} w={50} low />
            <Tool icon="calculate" label={['Calculate']} w={53} low />
          </Tools>
          <GroupLabel>Calculation</GroupLabel>
        </Group>
        <Group $w={369}>
          <Tools $pad={1}>
            <Tool icon="summary" label={['Summary']} w={56} />
            <Tool icon="strength" label={['Strength']} w={50} />
            <Tool icon="anchorage" label={['Anchorage']} w={62} />
            <Tool icon="stress" label={['Stress', 'limitation']} w={55} />
            <Tool icon="crack" label={['Crack', 'width']} w={34} active><Marker $box="-9px -7px -6px -7px" /></Tool>
            <Tool icon="deflection" label={['Deflection']} w={59} />
            <Tool icon="auxiliary" label={['Auxiliary']} w={50} />
          </Tools>
          <GroupLabel>Code-check results</GroupLabel>
        </Group>
        <Group $w={459}>
          <Tools $pad={0}>
            <LimitArea>
              <LimitButton>wlim</LimitButton>
              <Spin id="wlim" name="wlim" value="0.01" h={26} />
              <Unit>in</Unit>
              <Marker $box="-9px -2px 34px 0" />
            </LimitArea>
            <ModeArea>
              <Tool icon="ratio" label={['w/wlim']} w={42} />
              <Tool icon="crack" label={['w']} w={34} active />
              <Tool icon="spacing" label={['sr']} w={38} />
              <Tool icon="crack" label={['Unreinforce', 'area']} w={70} />
              <Marker $box="-8px 0 -6px 1px" />
            </ModeArea>
            <Options>
              <OptionButton $active $wide>Label extreme</OptionButton>
              <OptionButton $active>Group</OptionButton>
              <BarButton>Bar</BarButton>
              <ScaleLabel htmlFor="scale">Scale</ScaleLabel>
              <Spin id="scale" name="Scale" value="1.00" h={20} />
            </Options>
          </Tools>
          <GroupLabel>Results</GroupLabel>
        </Group>
      </Ribbon>

      <Main>
        <ViewPane>
          <ViewBar>
            <ViewButton $w={24} aria-label="Zoom"><svg width="18" height="18" fill="none" stroke="#333" strokeWidth="1.200"><circle cx="7.500" cy="7.500" r="6.500" /><path d="M12 12l5 5" /></svg></ViewButton>
            <ViewButton $w={20} $sep aria-label="Zoom options"><Chevron /></ViewButton>
            <ViewButton $active aria-label="Wireframe"><svg width="17" height="17" fill="none" stroke="#666" strokeWidth="1.200"><path d="M1 5h10v11H1zM1 5l5-4h10v11l-5 4M11 5l5-4M6 1v11M6 12h10M6 12l-5 4" /></svg></ViewButton>
            <ViewButton $sep aria-label="Solid"><svg width="17" height="17" fill="#777"><path d="M0 5h11v12H0zM1 4l5-4h11l-5 4zM12 5l5-4v11l-5 5z" /></svg></ViewButton>
            <ViewButton aria-label="Section"><svg width="17" height="14" fill="none" stroke="#777" strokeWidth="1.200"><path d="M1 3l4-2h11l-1 5-9 6-4-3zM1 3l5 1.500L16 2M6 4.500V12" /></svg></ViewButton>
            <ViewButton aria-label="Home"><svg width="16" height="15" fill="none" stroke="#bbb" strokeWidth="1.200"><path d="M1 8l7-7 7 7M3 7v7h3.500V9h3v5H13V7" /></svg></ViewButton>
            <ViewButton $w={25} aria-label="Full screen"><svg width="17" height="17" fill="none" stroke="#000" strokeWidth="1.400"><path d="M1 5V1h4M1 1l4 4M12 1h4v4M16 1l-4 4M1 12v4h4M1 16l4-4M16 12v4h-4M16 16l-4-4" /></svg></ViewButton>
          </ViewBar>
          <ViewBody>
            <SideColumn>
              <CheckHead><CheckMark />Strength</CheckHead>
              <CheckRows rows={strengthRows} />
              <CheckHead><CheckMark />Serviceability</CheckHead>
              <CheckRows rows={serviceRows} />
              <Legend>
                <LegendTitle $big>W</LegendTitle>
                <LegendTitle>[in]</LegendTitle>
                <LegendScale>
                  <LegendValues>{legend.map(([v]) => <span key={v}>{v}</span>)}</LegendValues>
                  <LegendBar>{legend.slice(0, 8).map(([v, c]) => <LegendCell key={v} $c={c} />)}</LegendBar>
                </LegendScale>
              </Legend>
            </SideColumn>
            <ModelView><Model /></ModelView>
            <Tree>
              {tree.map(r => (
                <TreeRow key={r.t}>
                  <Twisty>{r.head && <svg width="7" height="7"><path d="M6.500 0v6.500H0z" fill="#333" /></svg>}</Twisty>
                  <TreeButton $bold={r.head} $active={r.active} $off={r.off}>{r.t}</TreeButton>
                </TreeRow>
              ))}
            </Tree>
          </ViewBody>
        </ViewPane>
        <Splitter />
        <DetailPane>
          <TabBar><PaneTab>Reinforcement</PaneTab></TabBar>
          <DetailBody>
            <DetailTitle>Extreme Serviceability: C5 (D100.0%, L100.0%)</DetailTitle>
            <LoadRow>
              <label htmlFor="load">Load increment</label>
              <SelectBox>
                <LoadSelect id="load"><option>D100.0%, L100.0%</option></LoadSelect>
                <SelectArrow width="8" height="5"><path d="M0 0h7.500L3.700 5z" fill="#000" /></SelectArrow>
              </SelectBox>
            </LoadRow>
            <FieldRow><span>Combination type</span><span>Short-term</span></FieldRow>
            <GridWrap>
              <GridClip>
                <Grid>
                  <colgroup>{[97, 50, 50, 50, 50, 81, 35].map((w, i) => <col key={i} width={w} />)}</colgroup>
                  <thead>
                    <tr>{['Reinforcement', 'X [ft]', 'Z [ft]', 'w [in]', 'sr [in]', 'w / wlim [%]', ''].map(h => <th key={h}>{h}</th>)}</tr>
                  </thead>
                  <tbody>
                    {gridRows.map((r, i) => (
                      <GridRow key={i} $active={i === 0}>
                        {r.map((v, j) => <Num key={j} $bold={j === 3 && i !== 7}>{v}</Num>)}
                        <td><CheckCell><CheckMark /></CheckCell></td>
                      </GridRow>
                    ))}
                  </tbody>
                </Grid>
              </GridClip>
              <Track><Thumb /></Track>
              <Marker $box="29px 5px 225px -6px" />
            </GridWrap>
            <Note>The crack width is checked in the vicinity of the reinforcement only. No control of cracking is performed in non-reinforced zones.</Note>
            <Note>The presentation of crack spacing is schematic only. It does not represent the crack spacing computed for the calculations.</Note>
            <Divider />
            <Beam />
          </DetailBody>
        </DetailPane>
      </Main>

      <StatusBar>
        <span>Design Code: ACI</span>
        <span>Rounding: Imperial</span>
        <span>Presentation Units: Imperial</span>
      </StatusBar>
    </Page>
  );
}
